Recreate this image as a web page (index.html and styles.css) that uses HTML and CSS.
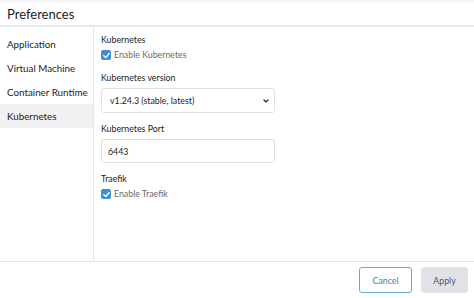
FILE: index.html
```html
<!DOCTYPE html>
<html>
<head>
<meta charset="utf-8">
<link rel="stylesheet" href="styles.css">
</head>
<body>
<div class="app">
  <header class="title">Preferences</header>
  <div class="main">
    <nav class="nav">
      <div class="nav-item">Application</div>
      <div class="nav-item">Virtual Machine</div>
      <div class="nav-item">Container Runtime</div>
      <div class="nav-item active">Kubernetes</div>
    </nav>
    <section class="content">
      <div class="group">
        <div class="label">Kubernetes</div>
        <label class="check"><span class="box"><svg viewBox="0 0 12 12" width="9" height="9"><path d="M2.4 6.3 L5 8.8 L9.6 3.4" fill="none" stroke="#fff" stroke-width="1.9" stroke-linecap="round" stroke-linejoin="round"/></svg></span>Enable Kubernetes</label>
      </div>
      <div class="group">
        <div class="label">Kubernetes version</div>
        <div class="field select">v1.24.3 (stable, latest)<svg class="chev" viewBox="0 0 10 6" width="6" height="4"><path d="M1 1 L5 4.6 L9 1" fill="none" stroke="#222" stroke-width="2.2"/></svg></div>
      </div>
      <div class="group">
        <div class="label">Kubernetes Port</div>
        <div class="field input">6443</div>
      </div>
      <div class="group">
        <div class="label">Traefik</div>
        <label class="check"><span class="box"><svg viewBox="0 0 12 12" width="9" height="9"><path d="M2.4 6.3 L5 8.8 L9.6 3.4" fill="none" stroke="#fff" stroke-width="1.9" stroke-linecap="round" stroke-linejoin="round"/></svg></span>Enable Traefik</label>
      </div>
    </section>
  </div>
  <footer class="footer">
    <button class="btn cancel">Cancel</button>
    <button class="btn apply">Apply</button>
  </footer>
</div>
</body>
</html>
```
FILE: styles.css
```css
html, body {
  margin: 0;
  padding: 0;
  background: #fff;
}
body {
  font-family: Lato, "Open Sans", sans-serif;
  color: #1c1c1c;
  width: 474px;
  height: 298px;
  overflow: hidden;
}
.app {
  display: flex;
  flex-direction: column;
  height: 298px;
  background: linear-gradient(#f2f2f2, #fff 4px);
}
.title {
  height: 26px;
  box-sizing: border-box;
  padding: 6px 0 0 7px;
  font-size: 13px;
  line-height: 16px;
  color: #1c1c1c;
  border-bottom: 1px solid #e0e0e0;
  box-shadow: 0 1px 1px #f0f0f0;
}
.main {
  flex: 1;
  display: flex;
  min-height: 0;
}
.nav {
  width: 93px;
  border-right: 1px solid #e4e4e4;
  padding-top: 6px;
  display: flex;
  flex-direction: column;
}
.nav-item {
  height: 24px;
  line-height: 24px;
  padding-left: 7px;
  font-size: 9.8px;
  white-space: nowrap;
  color: #1c1c1c;
}
.nav-item.active {
  background: #f1f1f3;
}
.content {
  flex: 1;
  padding: 8px 0 0 7px;
  display: flex;
  flex-direction: column;
}
.group {
  margin-bottom: 10px;
}
.group:first-child {
  margin-bottom: 11px;
}
.label {
  font-size: 8.8px;
  line-height: 12px;
  height: 12px;
  color: #1c1c1c;
}
.check {
  margin-top: 3px;
  display: flex;
  align-items: center;
  gap: 3px;
  height: 12px;
  font-size: 8.8px;
  line-height: 12px;
  color: #6a6a6a;
}
.box {
  width: 10px;
  height: 10px;
  border-radius: 2px;
  background: #3f8ed2;
  display: flex;
  align-items: center;
  justify-content: center;
}
.field {
  margin-top: 4px;
  width: 174px;
  height: 25px;
  box-sizing: border-box;
  border: 1px solid #e0e0e0;
  border-radius: 3px;
  display: flex;
  align-items: center;
  font-size: 8.8px;
  color: #1c1c1c;
}
.select {
  padding: 0 0 0 8px;
  justify-content: space-between;
}
.chev {
  margin-right: 5px;
}
.input {
  height: 24px;
  padding-left: 6px;
}
.footer {
  height: 36px;
  border-top: 1px solid #e4e4e4;
  display: flex;
  justify-content: flex-end;
  align-items: center;
  gap: 9px;
  padding: 0 6px 0 0;
}
.btn {
  font-family: Lato, "Open Sans", sans-serif;
  font-size: 8.8px;
  height: 26px;
  border-radius: 3px;
  box-sizing: border-box;
  padding: 0;
}
.cancel {
  width: 53px;
  background: #fff;
  border: 1px solid #6aa8d4;
  color: #3b7fb4;
}
.apply {
  width: 47px;
  background: #e1e2e7;
  border: 1px solid #e1e2e7;
  color: #555;
}
```
